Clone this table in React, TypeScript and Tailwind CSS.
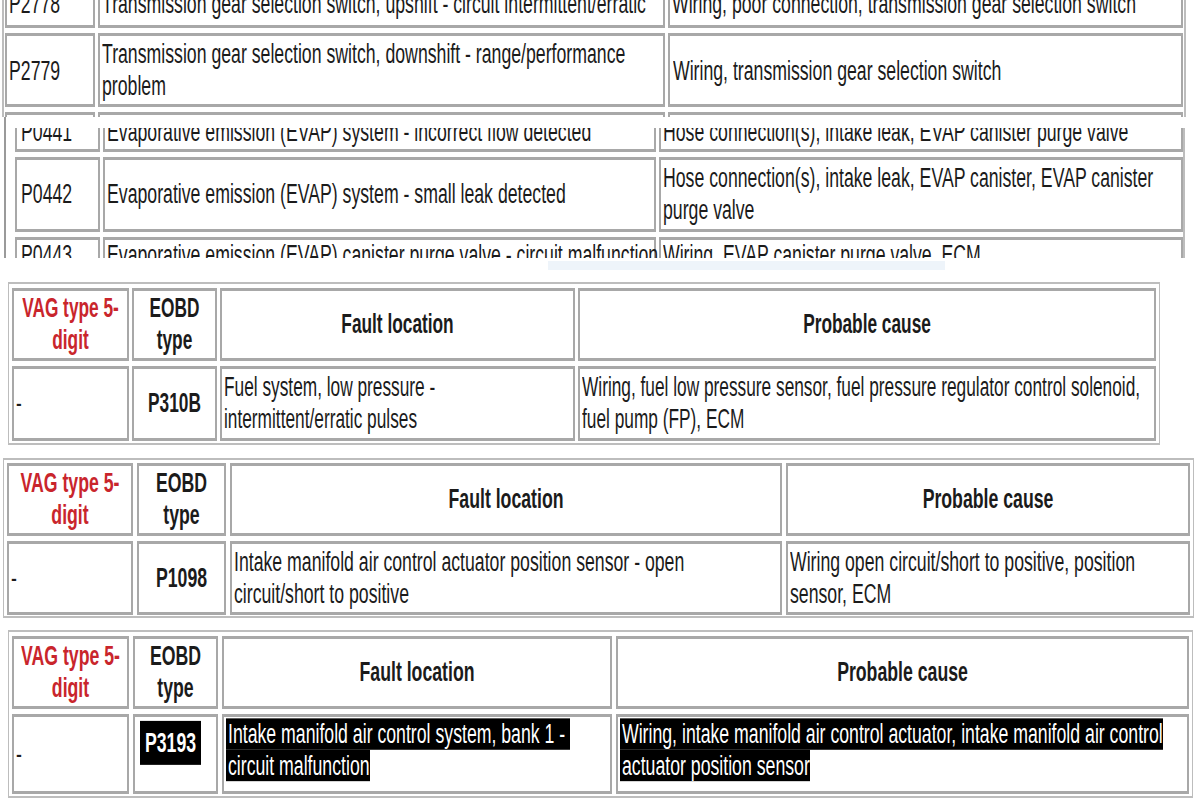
import React from 'react';

// Collage of five clipped screenshots of VAG / EOBD fault-code tables.
// The source images were stretched vertically, so text is drawn at its
// horizontal size and stretched with scaleY.

type Props = { className?: string; children?: React.ReactNode };

const Txt: React.FC<Props> = ({ className = '', children }) => (
  <div className={`whitespace-nowrap leading-[20.4px] [transform:scaleY(1.57)] ${className}`}>{children}</div>
);

const Cell: React.FC<Props> = ({ className = '', children }) => (
  <div className={`flex shrink-0 items-center border-x-2 border-y-[3px] border-[#a8a8a8] px-[2px] ${className}`}>
    {children}
  </div>
);

const Lines: React.FC<{ lines: string[] }> = ({ lines }) => (
  <>
    {lines.map((l, i) => (
      <div key={i}>{l}</div>
    ))}
  </>
);

const HeaderRow: React.FC<{ widths: string[]; gap: string; size: string }> = ({ widths, gap, size }) => (
  <div className={`flex h-[73px] ${gap}`}>
    <Cell className={`${widths[0]} justify-center text-center`}>
      <Txt className={`font-bold text-[#c9252c] ${size}`}>
        <Lines lines={['VAG type 5-', 'digit']} />
      </Txt>
    </Cell>
    <Cell className={`${widths[1]} justify-center text-center`}>
      <Txt className={`font-bold ${size}`}>
        <Lines lines={['EOBD', 'type']} />
      </Txt>
    </Cell>
    <Cell className={`${widths[2]} justify-center text-center`}>
      <Txt className={`font-bold ${size}`}>Fault location</Txt>
    </Cell>
    <Cell className={`${widths[3]} justify-center text-center`}>
      <Txt className={`font-bold ${size}`}>Probable cause</Txt>
    </Cell>
  </div>
);

export default function App() {
  return (
    <div className="h-[800px] w-[1200px] overflow-hidden bg-white font-['Liberation_Sans',Arial,sans-serif] text-[#1b1b1b]">
      {/* Strip 1: P2778 / P2779 */}
      <div className="h-[117px] overflow-hidden">
        <div className="-mt-[20px] ml-[2px] flex w-[1184px] flex-col gap-[5px] border-x-2 border-[#bdbdbd] px-[1px] text-[17.7px]">
          <div className="flex h-[48px] gap-[3px]">
            <Cell className="w-[90px]"><Txt>P2778</Txt></Cell>
            <Cell className="w-[567px]"><Txt>Transmission gear selection switch, upshift - circuit intermittent/erratic</Txt></Cell>
            <Cell className="w-[515px]"><Txt>Wiring, poor connection, transmission gear selection switch</Txt></Cell>
          </div>
          <div className="flex h-[74px] gap-[3px]">
            <Cell className="w-[90px] pt-[3px]"><Txt>P2779</Txt></Cell>
            <Cell className="w-[567px]">
              <Txt><Lines lines={['Transmission gear selection switch, downshift - range/performance', 'problem']} /></Txt>
            </Cell>
            <Cell className="w-[515px] pl-[3px] pt-[3px]"><Txt>Wiring, transmission gear selection switch</Txt></Cell>
          </div>
          <div className="flex h-[40px] gap-[3px]">
            <Cell className="w-[90px]" />
            <Cell className="w-[567px]" />
            <Cell className="w-[515px]" />
          </div>
        </div>
      </div>

      {/* Strip 2: P0441 / P0442 / P0443 */}
      <div className="ml-[4px] flex h-[141px] flex-col overflow-hidden border-l-2 border-[#9a9a9a]">
        <div className="h-[11px] shrink-0" />
        <div className="h-[130px] overflow-hidden">
          <div className="-mt-[15px] ml-[9px] flex w-[1170px] flex-col gap-[5px] border-r-2 border-[#bdbdbd] pr-[2px] text-[17.7px]">
            <div className="flex h-[39px] gap-[3px]">
              <Cell className="w-[85px] pl-[4px]"><Txt>P0441</Txt></Cell>
              <Cell className="w-[553px]"><Txt>Evaporative emission (EVAP) system - incorrect flow detected</Txt></Cell>
              <Cell className="w-[524px]"><Txt>Hose connection(s), intake leak, EVAP canister purge valve</Txt></Cell>
            </div>
            <div className="flex h-[75px] gap-[3px]">
              <Cell className="w-[85px] pl-[4px]"><Txt>P0442</Txt></Cell>
              <Cell className="w-[553px]"><Txt>Evaporative emission (EVAP) system - small leak detected</Txt></Cell>
              <Cell className="w-[524px]">
                <Txt><Lines lines={['Hose connection(s), intake leak, EVAP canister, EVAP canister', 'purge valve']} /></Txt>
              </Cell>
            </div>
            <div className="flex h-[36px] gap-[3px]">
              <Cell className="w-[85px] pl-[4px]"><Txt>P0443</Txt></Cell>
              <Cell className="w-[553px]"><Txt>Evaporative emission (EVAP) canister purge valve - circuit malfunction</Txt></Cell>
              <Cell className="w-[524px]"><Txt>Wiring, EVAP canister purge valve, ECM</Txt></Cell>
            </div>
          </div>
        </div>
      </div>

      {/* faint selection band between clippings */}
      <div className="h-[21px]">
        <div className="ml-[548px] mt-[3px] h-[9px] w-[397px] bg-[#eef4fa]" />
      </div>

      {/* Strip 3: P310B */}
      <div className="ml-[8px] flex w-[1152px] flex-col gap-[5px] border-x border-y-2 border-[#bdbdbd] px-[3px] pb-[2px] pt-[4px]">
        <HeaderRow widths={['w-[117px]', 'w-[85px]', 'w-[355px]', 'w-[578px]']} gap="gap-[3px]" size="text-[17.3px]" />
        <div className="flex h-[75px] gap-[3px] text-[17.3px]">
          <Cell className="w-[117px]"><Txt>-</Txt></Cell>
          <Cell className="w-[85px] justify-center"><Txt className="font-bold">P310B</Txt></Cell>
          <Cell className="w-[355px]">
            <Txt><Lines lines={['Fuel system, low pressure -', 'intermittent/erratic pulses']} /></Txt>
          </Cell>
          <Cell className="w-[578px]">
            <Txt><Lines lines={['Wiring, fuel low pressure sensor, fuel pressure regulator control solenoid,', 'fuel pump (FP), ECM']} /></Txt>
          </Cell>
        </div>
      </div>

      {/* Strip 4: P1098 */}
      <div className="ml-[3px] mt-[13px] flex w-[1191px] flex-col gap-[5px] border-x border-y-2 border-[#bdbdbd] px-[3px] pb-[1px] pt-[3px]">
        <HeaderRow widths={['w-[126px]', 'w-[89px]', 'w-[552px]', 'w-[404px]']} gap="gap-[4px]" size="text-[17.7px]" />
        <div className="flex h-[74px] gap-[4px] text-[17.7px]">
          <Cell className="w-[126px]"><Txt>-</Txt></Cell>
          <Cell className="w-[89px] justify-center"><Txt className="font-bold">P1098</Txt></Cell>
          <Cell className="w-[552px]">
            <Txt><Lines lines={['Intake manifold air control actuator position sensor - open', 'circuit/short to positive']} /></Txt>
          </Cell>
          <Cell className="w-[404px]">
            <Txt><Lines lines={['Wiring open circuit/short to positive, position', 'sensor, ECM']} /></Txt>
          </Cell>
        </div>
      </div>

      {/* Strip 5: P3193 (selected text) */}
      <div className="ml-[8px] mt-[12px] flex w-[1185px] flex-col gap-[5px] border-x border-y-2 border-[#bdbdbd] px-[3px] pb-[2px] pt-[4px]">
        <HeaderRow widths={['w-[117px]', 'w-[85px]', 'w-[390px]', 'w-[573px]']} gap="gap-[4px]" size="text-[17.7px]" />
        <div className="flex h-[80px] gap-[4px] text-[17.7px]">
          <Cell className="w-[117px]"><Txt>-</Txt></Cell>
          <Cell className="w-[85px] justify-center pb-[22px] pr-[12px]">
            <Txt className="font-bold"><span className="bg-black px-[5px] py-[4px] text-white">P3193</span></Txt>
          </Cell>
          <Cell className="w-[390px] px-0 pb-[8px]">
            <Txt>
              <div><span className="whitespace-pre bg-black pl-[2px] text-white">Intake manifold air control system, bank 1 - </span></div>
              <div><span className="bg-black pl-[2px] text-white">circuit malfunction</span></div>
            </Txt>
          </Cell>
          <Cell className="w-[573px] px-0 pb-[8px]">
            <Txt>
              <div><span className="bg-black pl-[2px] text-white">Wiring, intake manifold air control actuator, intake manifold air control</span></div>
              <div><span className="bg-black pl-[2px] text-white">actuator position sensor</span></div>
            </Txt>
          </Cell>
        </div>
      </div>
    </div>
  );
}
